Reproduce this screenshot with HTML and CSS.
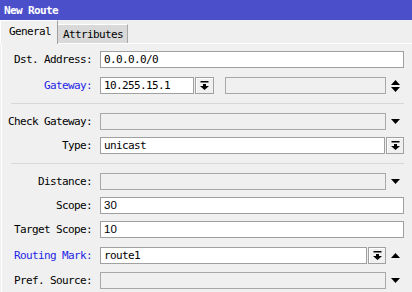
FILE: index.html
```html
<!DOCTYPE html>
<html>
<head>
<meta charset="utf-8">
<link rel="stylesheet" href="styles.css">
</head>
<body>
<div class="window">
  <div class="titlebar">New Route</div>
  <div class="tabs">
    <div class="tab active">General</div>
    <div class="tab">Attributes</div>
  </div>
  <div class="content">
    <div class="row">
      <div class="label">Dst. Address:</div>
      <div class="field">0.0.0.0/0</div>
    </div>
    <div class="row mt9">
      <div class="label link">Gateway:</div>
      <div class="field gw">10.255.15.1</div>
      <div class="btn gwbtn"><svg width="9" height="9" viewBox="0 0 9 9"><rect x="0.5" y="0" width="8" height="1.5"/><path d="M3 3h3v2h3L4.5 9 0 5h3z"/></svg></div>
      <div class="field disabled gw2"></div>
      <div class="slot"><svg width="9" height="12" viewBox="0 0 9 12"><path d="M4.5 0 9 5H0z M0 7h9L4.5 12z"/></svg></div>
    </div>
    <div class="sep mt9"></div>
    <div class="row mt9">
      <div class="label">Check Gateway:</div>
      <div class="field disabled"></div>
      <div class="slot"><svg width="9" height="5" viewBox="0 0 9 5"><path d="M0 0h9L4.5 5z"/></svg></div>
    </div>
    <div class="row mt7">
      <div class="label">Type:</div>
      <div class="field">unicast</div>
      <div class="btn"><svg width="9" height="9" viewBox="0 0 9 9"><rect x="0.5" y="0" width="8" height="1.5"/><path d="M3 3h3v2h3L4.5 9 0 5h3z"/></svg></div>
    </div>
    <div class="sep mt9"></div>
    <div class="row mt9">
      <div class="label">Distance:</div>
      <div class="field disabled"></div>
      <div class="slot"><svg width="9" height="5" viewBox="0 0 9 5"><path d="M0 0h9L4.5 5z"/></svg></div>
    </div>
    <div class="row mt7">
      <div class="label">Scope:</div>
      <div class="field num">30</div>
    </div>
    <div class="row mt7">
      <div class="label">Target Scope:</div>
      <div class="field num">10</div>
    </div>
    <div class="row mt9">
      <div class="label link">Routing Mark:</div>
      <div class="field">route1</div>
      <div class="btn"><svg width="9" height="9" viewBox="0 0 9 9"><rect x="0.5" y="0" width="8" height="1.5"/><path d="M3 3h3v2h3L4.5 9 0 5h3z"/></svg></div>
      <div class="slot"><svg width="9" height="5" viewBox="0 0 9 5"><path d="M4.5 0 9 5H0z"/></svg></div>
    </div>
    <div class="row mt8">
      <div class="label">Pref. Source:</div>
      <div class="field disabled"></div>
      <div class="slot"><svg width="9" height="5" viewBox="0 0 9 5"><path d="M0 0h9L4.5 5z"/></svg></div>
    </div>
  </div>
</div>
</body>
</html>
```
FILE: styles.css
```css
html, body {
  margin: 0;
  padding: 0;
  background: #f0f0f0;
}
body {
  width: 412px;
  height: 292px;
  overflow: hidden;
  font-family: "DejaVu Sans Mono", "Liberation Mono", monospace;
  font-size: 11px;
  letter-spacing: -0.62px;
  color: #000;
}
.window {
  display: flex;
  flex-direction: column;
}
.titlebar {
  height: 20px;
  background: #4b4fca;
  color: #fff;
  font-weight: bold;
  line-height: 21px;
  padding-left: 4px;
}
.tabs {
  height: 24px;
  box-sizing: border-box;
  display: flex;
  align-items: flex-end;
  border-bottom: 1px solid #ffffff;
  background: #efefef;
}
.tab {
  height: 19px;
  box-sizing: border-box;
  background: #d9d9d9;
  border-right: 1px solid #a8a8a8;
  border-top: 1px solid #ffffff;
  padding: 0 5px 0 5px;
  line-height: 19px;
  width: 70px;
}
.tab.active {
  height: 24px;
  width: 58px;
  background: #f0f0f0;
  border-left: 1px solid #ffffff;
  border-top: 1px solid #ffffff;
  border-right: 1px solid #a0a0a0;
  margin-bottom: -1px;
  padding-left: 8px;
  line-height: 22px;
}
.content {
  display: flex;
  flex-direction: column;
  padding: 7px 8px 0 0;
  border-left: 1px solid #ffffff;
  margin-left: 1px;
  height: 250px;
}
.row {
  display: flex;
  align-items: center;
  height: 17px;
}
.mt7 { margin-top: 7px; }
.mt8 { margin-top: 8px; }
.mt9 { margin-top: 9px; }
.label {
  width: 90px;
  margin-right: 8px;
  text-align: right;
  white-space: nowrap;
}
.label.link {
  color: #1f1fe6;
}
.field {
  flex: 1;
  height: 17px;
  box-sizing: border-box;
  border: 1px solid #a0a0a0;
  background: #ffffff;
  padding-left: 3px;
  line-height: 15px;
  white-space: nowrap;
}
.field.num {
  font-family: "Liberation Sans", Arial, sans-serif;
  letter-spacing: 0;
  font-size: 11.5px;
}
.field.disabled {
  background: #f0f0f0;
  border-color: #a8a8a8;
}
.field.gw {
  flex: 0 0 94px;
}
.field.gw2 {
  margin-left: 11px;
}
.btn {
  width: 18px;
  height: 17px;
  box-sizing: border-box;
  margin-left: 1px;
  border: 1px solid #a0a0a0;
  background: #f0f0f0;
  box-shadow: inset 1px 1px #ffffff;
  display: flex;
  align-items: center;
  justify-content: center;
}
.btn.gwbtn {
  width: 19px;
}
.slot {
  width: 18px;
  height: 17px;
  display: flex;
  align-items: center;
  justify-content: center;
}
svg {
  display: block;
  fill: #000;
}
.sep {
  height: 1px;
  background: #d8d8d8;
  margin-left: 9px;
}
```
